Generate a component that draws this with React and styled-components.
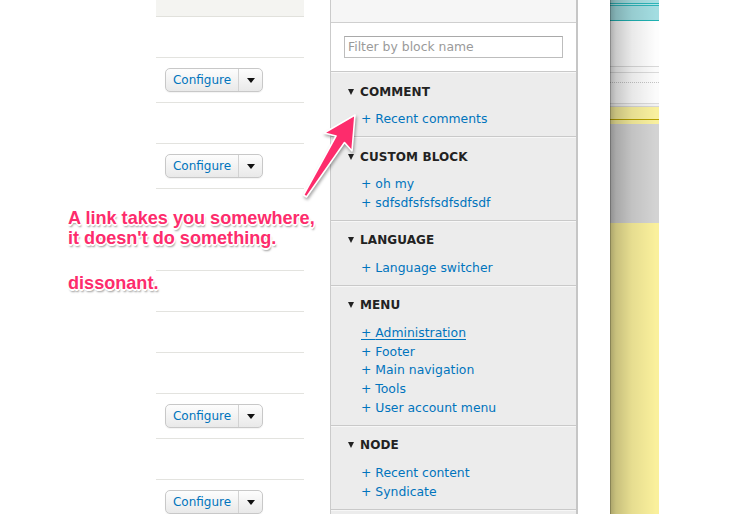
import React from "react";
import styled, { createGlobalStyle } from "styled-components";

const Global = createGlobalStyle`
  html, body { margin: 0; padding: 0; background: #fff; }
  body { font-family: "DejaVu Sans", "Liberation Sans", sans-serif; }
  * { box-sizing: border-box; }
`;

const Page = styled.div`
  position: relative;
  width: 748px;
  height: 514px;
  overflow: hidden;
  display: flex;
  align-items: flex-start;
  background: #fff;
`;

const Spacer = styled.div`
  width: ${(p) => p.$w}px;
  flex: none;
  height: 514px;
`;

/* ---------- left table ---------- */
const Table = styled.div`
  width: 148px;
  flex: none;
  display: flex;
  flex-direction: column;
`;

const TableHead = styled.div`
  height: 17px;
  background: #f4f4f1;
  border-bottom: 1px solid #e1e1dc;
`;

const Row = styled.div`
  height: ${(p) => p.$h}px;
  flex: none;
  border-bottom: 1px solid #e3e3df;
  display: flex;
  align-items: center;
  padding-left: 9px;
`;

const DropButton = styled.div`
  display: flex;
  align-items: stretch;
  height: 24px;
  width: 98px;
  border: 1px solid #c8c8c8;
  border-radius: 5px;
  background: linear-gradient(#fdfdfd, #e9e9e9);
  box-shadow: 0 1px 1px rgba(0, 0, 0, 0.05);
`;

const ButtonLabel = styled.span`
  width: 73px;
  display: flex;
  align-items: center;
  justify-content: center;
  font-size: 12px;
  color: #0074bd;
  border-right: 1px solid #d2d2d2;
  padding-bottom: 1px;
`;

const Toggle = styled.span`
  flex: 1;
  display: flex;
  align-items: center;
  justify-content: center;
  &::after {
    content: "";
    border-left: 4px solid transparent;
    border-right: 4px solid transparent;
    border-top: 5px solid #111;
  }
`;

/* ---------- sidebar ---------- */
const Sidebar = styled.div`
  width: 248px;
  flex: none;
  height: 514px;
  border-left: 1px solid #cbcbcb;
  border-right: 2px solid #c6c6c6;
  background: #ececec;
  display: flex;
  flex-direction: column;
  font-size: 12.4px;
`;

const TopBar = styled.div`
  height: 23px;
  flex: none;
  background: #f6f6f6;
  border-bottom: 1px solid #cfcfcf;
`;

const FilterArea = styled.div`
  height: 48px;
  flex: none;
  background: #fff;
  padding: 13px 0 0 13px;
`;

const FilterInput = styled.input`
  width: 219px;
  height: 22px;
  border: 1px solid #bdbdbd;
  border-top-color: #a9a9a9;
  border-radius: 0;
  padding: 0 0 1px 3px;
  font-family: "DejaVu Sans", sans-serif;
  font-size: 12.4px;
  color: #333;
  background: #fff;
  outline: none;
  &::placeholder { color: #9a9a9a; }
`;

const Section = styled.div`
  flex: none;
  border-top: 1px solid #c9c9c9;
  box-shadow: inset 0 1px 0 #f7f7f7;
  padding: 11.5px 0 7.2px 17px;
`;

const SectionHead = styled.div`
  display: flex;
  align-items: center;
  height: 16px;
  margin-bottom: 10.6px;
  font-weight: bold;
  font-size: 12px;
  color: #222;
  letter-spacing: 0.1px;
  &::before {
    content: "";
    border-left: 3.5px solid transparent;
    border-right: 3.5px solid transparent;
    border-top: 6px solid #222;
    margin-right: 6px;
  }
`;

const Items = styled.ul`
  list-style: none;
  margin: 0;
  padding: 0 0 0 13px;
`;

const Item = styled.li`
  line-height: 18.75px;
  height: 18.75px;
  white-space: nowrap;
`;

const ItemLink = styled.a`
  color: #0074bd;
  text-decoration: ${(p) => (p.$active ? "underline" : "none")};
  text-underline-offset: 2px;
`;

/* ---------- screenshot strip ---------- */
const Strip = styled.div`
  position: relative;
  width: 49px;
  flex: none;
  height: 514px;
  display: flex;
  flex-direction: column;
  &::after {
    content: "";
    position: absolute;
    inset: 0;
    background: linear-gradient(
      to right,
      rgba(0, 0, 0, 0.6) 0px,
      rgba(0, 0, 0, 0.3) 1px,
      rgba(0, 0, 0, 0.2) 6px,
      rgba(0, 0, 0, 0.08) 22px,
      rgba(0, 0, 0, 0) 46px
    );
  }
`;

const Band = styled.div`
  height: ${(p) => p.$h}px;
  flex: ${(p) => (p.$grow ? "1" : "none")};
  background: ${(p) => p.$c};
  ${(p) => (p.$dotted ? `border-bottom: 1px dotted #c4c4c4;` : "")}
`;

/* ---------- annotation overlay ---------- */
const Note = styled.div`
  position: absolute;
  left: 68px;
  top: 208px;
  font-family: "Liberation Sans", Arial, sans-serif;
  font-weight: bold;
  font-size: 18.1px;
  line-height: 20px;
  color: #fd2c6c;
  text-shadow:
    -1px -1px 0 #fff, 1px -1px 0 #fff, -1px 1px 0 #fff, 1px 1px 0 #fff,
    0 -1.5px 0 #fff, 0 1.5px 0 #fff, -1.5px 0 0 #fff, 1.5px 0 0 #fff,
    1px 2.5px 2px rgba(0, 0, 0, 0.4);
  white-space: nowrap;
`;

const NoteLine = styled.div`
  margin-top: ${(p) => p.$gap || 0}px;
`;

const ArrowSvg = styled.svg`
  position: absolute;
  left: 290px;
  top: 108px;
  overflow: visible;
  filter: drop-shadow(1px 2px 1.5px rgba(0, 0, 0, 0.35));
`;

const tableRows = [
  { h: 40 },
  { h: 44, btn: true },
  { h: 40 },
  { h: 44, btn: true },
  { h: 81 },
  { h: 40 },
  { h: 40 },
  { h: 40 },
  { h: 44, btn: true },
  { h: 40 },
  { h: 44, btn: true },
];

const sections = [
  { title: "COMMENT", items: ["Recent comments"] },
  { title: "CUSTOM BLOCK", items: ["oh my", "sdfsdfsfsfsdfsdfsdf"] },
  { title: "LANGUAGE", items: ["Language switcher"] },
  {
    title: "MENU",
    items: ["Administration", "Footer", "Main navigation", "Tools", "User account menu"],
    active: 0,
  },
  { title: "NODE", items: ["Recent content", "Syndicate"] },
];

const bands = [
  { h: 3, c: "#a7dfe2" },
  { h: 1, c: "#2db5b9" },
  { h: 1, c: "#b4e4e7" },
  { h: 1, c: "#2db5b9" },
  { h: 14, c: "#a3dde1" },
  { h: 1, c: "#1fb1b2" },
  { h: 45, c: "#fdfdfd" },
  { h: 1, c: "#d8d8d8" },
  { h: 5, c: "#fbfbfb" },
  { h: 1, c: "#dadada" },
  { h: 10, c: "#fbfbfb", dotted: true },
  { h: 20, c: "#fbfbfb" },
  { h: 1, c: "#d9d9d9" },
  { h: 2, c: "#f3f3f3" },
  { h: 1, c: "#d5d5d5" },
  { h: 12, c: "#f9f09e" },
  { h: 1, c: "#b8a200" },
  { h: 4, c: "#f9f09e" },
  { h: 99, c: "#d3d3d3" },
  { h: 0, c: "#faf09c", grow: true },
];

export default function App() {
  return (
    <>
      <Global />
      <Page>
        <Spacer $w={156} />
        <Table>
          <TableHead />
          {tableRows.map((r, i) => (
            <Row key={i} $h={r.h + 1}>
              {r.btn && (
                <DropButton>
                  <ButtonLabel>Configure</ButtonLabel>
                  <Toggle />
                </DropButton>
              )}
            </Row>
          ))}
        </Table>
        <Spacer $w={26} />
        <Sidebar>
          <TopBar />
          <FilterArea>
            <FilterInput placeholder="Filter by block name" />
          </FilterArea>
          {sections.map((s) => (
            <Section key={s.title}>
              <SectionHead>{s.title}</SectionHead>
              <Items>
                {s.items.map((it, i) => (
                  <Item key={it}>
                    <ItemLink href="#" $active={s.active === i}>
                      + {it}
                    </ItemLink>
                  </Item>
                ))}
              </Items>
            </Section>
          ))}
          <Section />
        </Sidebar>
        <Spacer $w={32} />
        <Strip>
          {bands.map((b, i) => (
            <Band key={i} $h={b.h} $c={b.c} $grow={b.grow} $dotted={b.dotted} />
          ))}
        </Strip>
        <Spacer $w={89} />

        <ArrowSvg width="80" height="100" viewBox="0 0 80 100">
          <polygon
            points="65,7 62,43 54.5,34.5 16.5,89 13.5,87 46,28 34,25"
            fill="#fd2c6c"
            stroke="#fff"
            strokeWidth="1.6"
            strokeLinejoin="round"
          />
        </ArrowSvg>
        <Note>
          <NoteLine>A link takes you somewhere,</NoteLine>
          <NoteLine>it doesn't do something.</NoteLine>
          <NoteLine $gap={25}>dissonant.</NoteLine>
        </Note>
      </Page>
    </>
  );
}
